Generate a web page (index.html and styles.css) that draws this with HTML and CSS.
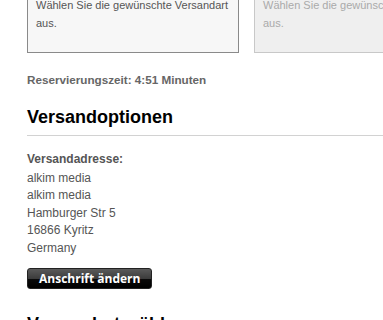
FILE: index.html
```html
<!DOCTYPE html>
<html lang="de">
<head>
<meta charset="utf-8">
<title>Versandoptionen</title>
<link rel="stylesheet" href="styles.css">
</head>
<body>
<div class="page">
  <div class="options">
    <div class="box box-active">Wählen Sie die gewünschte Versandart aus.</div>
    <div class="box box-disabled">Wählen Sie die gewünschte Versandart aus.</div>
  </div>
  <p class="timer">Reservierungszeit: 4:51 Minuten</p>
  <h2 class="section-title">Versandoptionen</h2>
  <div class="address">
    <div class="address-label">Versandadresse:</div>
    <div>alkim media</div>
    <div>alkim media</div>
    <div>Hamburger Str 5</div>
    <div>16866 Kyritz</div>
    <div>Germany</div>
  </div>
  <a class="btn" href="#">Anschrift ändern</a>
  <h2 class="section-title plain">Versandart wählen</h2>
</div>
</body>
</html>
```
FILE: styles.css
```css
html, body {
  margin: 0;
  padding: 0;
  overflow: hidden;
  background: #fff;
}
body {
  font-family: "Liberation Sans", Arial, sans-serif;
  color: #555;
}
.page {
  padding-left: 27px;
}
.options {
  display: flex;
  gap: 15px;
  margin-top: -14px;
}
.box {
  flex: 0 0 212px;
  box-sizing: border-box;
  padding: 9px 8px 20px 8px;
  font-size: 11px;
  line-height: 18px;
}
.box-active {
  border: 1px solid #8a8a8a;
  background: #f7f7f7;
  color: #555;
}
.box-disabled {
  border: 1px solid #c8c8c8;
  background: #efefef;
  color: #aaa;
}
.timer {
  margin: 18px 0 0;
  font-size: 11.7px;
  line-height: 18px;
  font-weight: bold;
  color: #666;
}
.section-title {
  margin: 17px 0 0;
  padding-bottom: 7px;
  border-bottom: 1px solid #d2d2d2;
  font-size: 18px;
  line-height: 22px;
  font-weight: bold;
  color: #000;
}
.section-title.plain {
  margin-top: 24px;
}
.address {
  margin-top: 15px;
  font-size: 12px;
  line-height: 17.5px;
  color: #555;
}
.address-label {
  font-weight: bold;
  margin-bottom: 1px;
}
.btn {
  display: inline-block;
  margin-top: 11px;
  height: 21px;
  padding: 0 11px;
  box-sizing: border-box;
  border-radius: 3px;
  background: linear-gradient(to bottom, #5a5a5a 0%, #3c3c3c 50%, #0a0a0a 52%, #000 100%);
  border: 1px solid #222;
  color: #fff;
  font-family: "Open Sans", sans-serif;
  font-weight: bold;
  font-size: 12px;
  line-height: 19px;
  text-decoration: none;
}
```
